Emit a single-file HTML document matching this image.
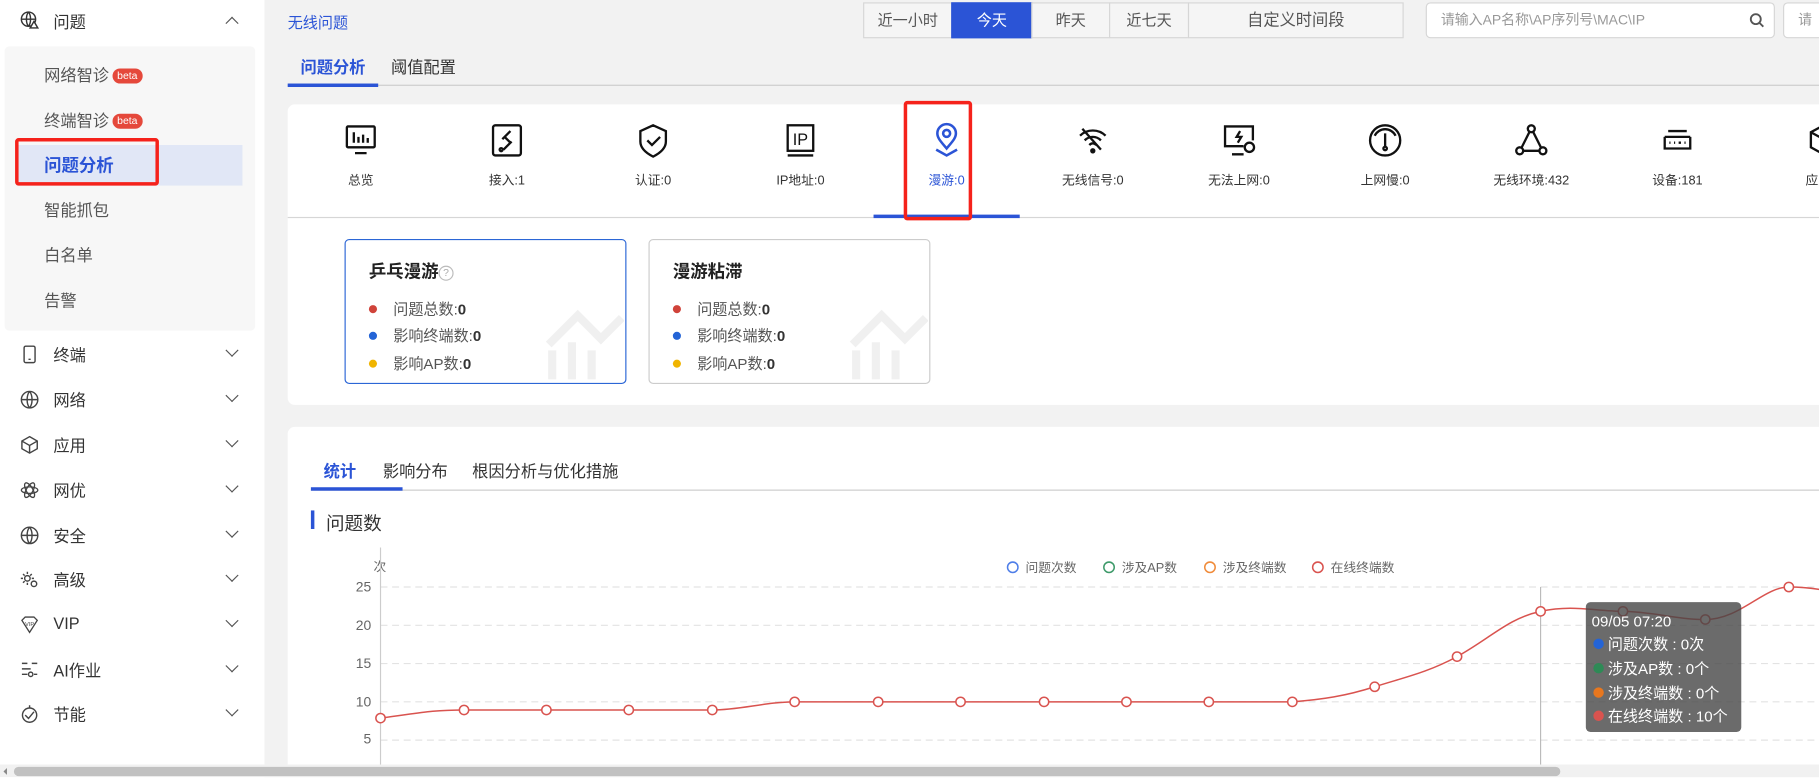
<!DOCTYPE html>
<html><head><meta charset="utf-8"><style>
*{box-sizing:border-box;margin:0;padding:0}
html,body{width:1819px;height:778px;overflow:hidden}
body{background:#fff;font-family:"Liberation Sans","Noto Sans CJK SC",sans-serif;font-size:14px;color:#333;position:relative}
#w{position:absolute;left:0;top:0;width:1568px;height:670px;overflow:hidden;transform:scale(1.16008);transform-origin:0 0;background:#fff}
.abs{position:absolute}
.side{left:0;top:0;width:228px;height:670px;background:#fff}
.sub{left:4px;top:40px;width:216px;height:245px;background:#f7f7f7;border-radius:4px}
.si{position:absolute;left:38px;font-size:14px;color:#555}
.mi{position:absolute;left:46px;font-size:14px;color:#333}
.chev{position:absolute;left:196px;width:8px;height:8px;border-right:1.5px solid #555;border-bottom:1.5px solid #555;transform:rotate(45deg)}
.ic{position:absolute;left:17px;width:17px;height:17px}
.beta{display:inline-block;background:#e5483b;color:#fff;font-size:9px;border-radius:7px;padding:0 4px;line-height:13px;margin-left:3px;vertical-align:2px}
.main{left:228px;top:0;width:1340px;height:670px;background:#f2f2f2}
.tb{position:absolute;top:2px;height:31px;border:1px solid #d6d6d6;background:#f5f5f5;font-size:13px;color:#555;text-align:center;line-height:29px}
.panel{background:#fff;border-radius:6px}
.it{position:absolute;top:105px;width:126px;text-align:center;font-size:11px;color:#333}
.it svg{display:block;margin:0 auto 10px;width:32px;height:32px}
.card{position:absolute;top:206px;width:243px;height:125px;border:1px solid #ccc;border-radius:4px;background:#fff}
.card h3{position:absolute;left:20px;top:16px;font-size:15px;font-weight:bold;color:#222}
.card .r{position:absolute;left:20px;font-size:13px;color:#555}
.card .r b{color:#333}
.dot{display:inline-block;width:7px;height:7px;border-radius:50%;margin-right:14px;vertical-align:1px}
.yl{position:absolute;left:300px;font-size:12px;color:#666;width:20px;text-align:right}
</style></head><body><div id="w">
<div class="abs side">
<svg class="ic" style="top:9px" viewBox="0 0 18 18" fill="none" stroke="#333" stroke-width="1.3"><circle cx="8" cy="8" r="6.5"/><path d="M1.5 8h13M8 1.5c-2.5 3-2.5 10 0 13M8 1.5c2.5 3 2.5 10 0 13"/><path d="M13 10l3.5 6h-7z" fill="#fff"/></svg>
<div class="mi" style="top:9px">问题</div>
<div class="chev" style="top:16px;transform:rotate(225deg)"></div>
<div class="abs sub"></div>
<div class="si" style="top:55px">网络智诊<span class="beta">beta</span></div>
<div class="si" style="top:94px">终端智诊<span class="beta">beta</span></div>
<div class="abs" style="left:14px;top:125px;width:195px;height:35px;background:#e1e7f6"></div>
<div class="abs" style="left:13px;top:119px;width:124px;height:41px;border:3px solid #f5221b;border-radius:3px"></div>
<div class="si" style="top:132px;color:#2b54d6;font-weight:bold;font-size:15px">问题分析</div>
<div class="si" style="top:171px">智能抓包</div>
<div class="si" style="top:210px">白名单</div>
<div class="si" style="top:249px">告警</div>
<svg class="ic" style="top:297px" viewBox="0 0 18 18" fill="none" stroke="#444" stroke-width="1.3"><rect x="4" y="1.5" width="10" height="15" rx="1.5"/><path d="M8 13.5h2"/></svg><div class="mi" style="top:296px">终端</div><div class="chev" style="top:298px"></div>
<svg class="ic" style="top:336px" viewBox="0 0 18 18" fill="none" stroke="#444" stroke-width="1.3"><circle cx="9" cy="9" r="7.5"/><path d="M1.5 9h15M9 1.5c-3 3.5-3 11.5 0 15M9 1.5c3 3.5 3 11.5 0 15"/></svg><div class="mi" style="top:335px">网络</div><div class="chev" style="top:337px"></div>
<svg class="ic" style="top:375px" viewBox="0 0 18 18" fill="none" stroke="#444" stroke-width="1.3"><path d="M9 1.5l7 4v7l-7 4-7-4v-7zM2 5.5l7 4 7-4M9 9.5v7"/></svg><div class="mi" style="top:374px">应用</div><div class="chev" style="top:376px"></div>
<svg class="ic" style="top:414px" viewBox="0 0 18 18" fill="none" stroke="#444" stroke-width="1.2"><ellipse cx="9" cy="9" rx="7.5" ry="3"/><ellipse cx="9" cy="9" rx="7.5" ry="3" transform="rotate(60 9 9)"/><ellipse cx="9" cy="9" rx="7.5" ry="3" transform="rotate(120 9 9)"/></svg><div class="mi" style="top:413px">网优</div><div class="chev" style="top:415px"></div>
<svg class="ic" style="top:453px" viewBox="0 0 18 18" fill="none" stroke="#444" stroke-width="1.3"><circle cx="9" cy="9" r="7.5"/><path d="M1.5 9h15M9 1.5c-3 3.5-3 11.5 0 15M9 1.5c3 3.5 3 11.5 0 15"/></svg><div class="mi" style="top:452px">安全</div><div class="chev" style="top:454px"></div>
<svg class="ic" style="top:491px" viewBox="0 0 18 18" fill="none" stroke="#444" stroke-width="1.3"><circle cx="7" cy="8" r="2.5"/><path d="M7 2v2M7 12v2M1 8h2M11 8h2M3 4l1.5 1.5M11 4l-1.5 1.5M3 12l1.5-1.5"/><circle cx="13" cy="13" r="2.5"/></svg><div class="mi" style="top:490px">高级</div><div class="chev" style="top:492px"></div>
<svg class="ic" style="top:530px" viewBox="0 0 18 18" fill="none" stroke="#444" stroke-width="1.2"><path d="M2 5l3-3h8l3 3-7 11z"/><text x="9" y="10" font-size="5" text-anchor="middle" fill="#444" stroke="none">VIP</text></svg><div class="mi" style="top:529px">VIP</div><div class="chev" style="top:531px"></div>
<svg class="ic" style="top:569px" viewBox="0 0 18 18" fill="none" stroke="#444" stroke-width="1.3"><path d="M2 3h5M2 8h8M2 13h5M11 3h5M13 13h3"/><circle cx="10" cy="13" r="2"/></svg><div class="mi" style="top:568px">AI作业</div><div class="chev" style="top:570px"></div>
<svg class="ic" style="top:607px" viewBox="0 0 18 18" fill="none" stroke="#444" stroke-width="1.3"><circle cx="9" cy="10" r="6.5"/><path d="M9 3.5V1M5 10l3 3 5-6"/></svg><div class="mi" style="top:606px">节能</div><div class="chev" style="top:608px"></div>
</div>

<div class="abs main"></div>
<div class="abs" style="left:248px;top:9px;font-size:13px;color:#2b54d6">无线问题</div>
<div class="tb" style="left:744px;width:77px">近一小时</div>
<div class="tb" style="left:820px;width:70px;background:#2b54d6;color:#fff;border-color:#2b54d6">今天</div>
<div class="tb" style="left:889px;width:68px">昨天</div>
<div class="tb" style="left:956px;width:69px">近七天</div>
<div class="tb" style="left:1024px;width:186px;font-size:14px">自定义时间段</div>
<div class="abs" style="left:1229px;top:2px;width:301px;height:31px;border:1px solid #d6d6d6;border-radius:4px;background:#fff;font-size:12px;color:#999;line-height:29px;padding-left:12px">请输入AP名称\AP序列号\MAC\IP
<svg style="position:absolute;right:8px;top:8px" width="13" height="13" viewBox="0 0 13 13" fill="none" stroke="#555" stroke-width="1.6"><circle cx="5.5" cy="5.5" r="4.3"/><path d="M8.7 8.7l3.3 3.3"/></svg></div>
<div class="abs" style="left:1537px;top:2px;width:290px;height:31px;border:1px solid #d6d6d6;border-radius:4px;background:#fff;font-size:12px;color:#999;line-height:29px;padding-left:12px">请</div>

<div class="abs" style="left:259px;top:48px;font-size:14px;font-weight:bold;color:#2b54d6">问题分析</div>
<div class="abs" style="left:337px;top:48px;font-size:14px;color:#333">阈值配置</div>
<div class="abs" style="left:248px;top:73px;width:1320px;height:1px;background:#ccc"></div>
<div class="abs" style="left:248px;top:72px;width:78px;height:3px;background:#2b54d6"></div>

<div class="abs panel" style="left:248px;top:90px;width:1580px;height:259px"></div>
<div class="abs" style="left:248px;top:187px;width:1320px;height:1px;background:#d6d6d6"></div>
<div class="abs" style="left:753px;top:185px;width:126px;height:3px;background:#2b54d6"></div>

<div class="it" style="left:248px"><svg viewBox="0 0 32 32" fill="none" stroke="#111" stroke-width="2"><rect x="4" y="4" width="24" height="18" rx="1"/><path d="M10 9v9M14 13v5M18 11v7M22 14v4M11 27h10"/></svg>总览</div>
<div class="it" style="left:374px"><svg viewBox="0 0 32 32" fill="none" stroke="#111" stroke-width="2"><rect x="4" y="3" width="24" height="26" rx="2"/><path d="M19 8l-7 7M20 17l-7 7M14 13l5 5"/><circle cx="11" cy="24" r="1.3"/></svg>接入:1</div>
<div class="it" style="left:500px"><svg viewBox="0 0 32 32" fill="none" stroke="#111" stroke-width="2"><path d="M16 3l11 5v9c0 6-5 10-11 13C10 27 5 23 5 17V8z"/><path d="M11 16l4 4 7-7"/></svg>认证:0</div>
<div class="it" style="left:627px"><svg viewBox="0 0 32 32" fill="none" stroke="#111" stroke-width="2"><rect x="5" y="3" width="22" height="22"/><path d="M5 29h22"/><text x="16" y="20" font-size="14" text-anchor="middle" fill="#111" stroke="none" font-family="Liberation Sans">IP</text></svg>IP地址:0</div>
<div class="it" style="left:753px;color:#2b54d6"><svg viewBox="0 0 32 32" fill="none" stroke="#2b54d6" stroke-width="2.2"><path d="M16 23c-5-6-8-9-8-13a8 8 0 0116 0c0 4-3 7-8 13z"/><circle cx="16" cy="10" r="3"/><path d="M7 24l9 5 9-5"/></svg>漫游:0</div>
<div class="it" style="left:879px"><svg viewBox="0 0 32 32" fill="none" stroke="#111" stroke-width="2"><path d="M5 12c6-6 16-6 22 0M9 16c4-4 10-4 14 0M13 20c2-2 4-2 6 0M7 6l16 18"/><circle cx="16" cy="25" r="1.3" fill="#111"/></svg>无线信号:0</div>
<div class="it" style="left:1005px"><svg viewBox="0 0 32 32" fill="none" stroke="#111" stroke-width="2"><path d="M20 21H4V4h24v12M10 28h10"/><path d="M17 8l-3 5h4l-3 5"/><circle cx="25" cy="22" r="4"/></svg>无法上网:0</div>
<div class="it" style="left:1131px"><svg viewBox="0 0 32 32" fill="none" stroke="#111" stroke-width="2"><circle cx="16" cy="16" r="13"/><path d="M7 12a10 10 0 0118 0M16 10v12"/><circle cx="16" cy="23" r="1.5"/></svg>上网慢:0</div>
<div class="it" style="left:1257px"><svg viewBox="0 0 32 32" fill="none" stroke="#111" stroke-width="2"><circle cx="16" cy="6" r="3"/><circle cx="6" cy="25" r="3"/><circle cx="26" cy="25" r="3"/><path d="M14.5 8.5L7.5 22.5M17.5 8.5l7 14M9 25h14"/></svg>无线环境:432</div>
<div class="it" style="left:1383px"><svg viewBox="0 0 32 32" fill="none" stroke="#111" stroke-width="2"><path d="M8 8h16M5 13h22M5 13v10h22V13"/><path d="M9 18h1M13 18h1M17 18h2M22 18h1"/></svg>设备:181</div>
<div class="it" style="left:1509px"><svg viewBox="0 0 32 32" fill="none" stroke="#111" stroke-width="2"><path d="M16 3l11 6v13l-11 6-11-6V9zM5 9l11 6 11-6M16 15v13"/></svg>应用:0</div>
<div class="abs" style="left:779px;top:87px;width:59px;height:103px;border:3px solid #f5221b;border-radius:3px"></div>

<div class="card" style="left:297px;border-color:#2b66d6">
<h3>乒乓漫游<span style="display:inline-block;width:13px;height:13px;border:1px solid #bbb;border-radius:50%;font-size:9px;color:#aaa;text-align:center;line-height:11px;font-weight:normal;vertical-align:1px">?</span></h3>
<div class="r" style="top:49px"><span class="dot" style="background:#d0433a"></span>问题总数:<b>0</b></div>
<div class="r" style="top:72px"><span class="dot" style="background:#2464d6"></span>影响终端数:<b>0</b></div>
<div class="r" style="top:96px"><span class="dot" style="background:#f0b400"></span>影响AP数:<b>0</b></div>
<svg style="position:absolute;left:170px;top:50px" width="70" height="70" viewBox="0 0 70 70" fill="none" stroke="#f0f0f0" stroke-width="7"><path d="M5 40l25-25 20 20 18-18M8 70V45M25 70V38M42 70V45"/></svg>
</div>
<div class="card" style="left:559px">
<h3>漫游粘滞</h3>
<div class="r" style="top:49px"><span class="dot" style="background:#d0433a"></span>问题总数:<b>0</b></div>
<div class="r" style="top:72px"><span class="dot" style="background:#2464d6"></span>影响终端数:<b>0</b></div>
<div class="r" style="top:96px"><span class="dot" style="background:#f0b400"></span>影响AP数:<b>0</b></div>
<svg style="position:absolute;left:170px;top:50px" width="70" height="70" viewBox="0 0 70 70" fill="none" stroke="#f0f0f0" stroke-width="7"><path d="M5 40l25-25 20 20 18-18M8 70V45M25 70V38M42 70V45"/></svg>
</div>

<div class="abs panel" style="left:248px;top:368px;width:1580px;height:300px"></div>
<div class="abs" style="left:279px;top:396px;font-size:14px;font-weight:bold;color:#2b54d6">统计</div>
<div class="abs" style="left:330px;top:396px;font-size:14px;color:#333">影响分布</div>
<div class="abs" style="left:407px;top:396px;font-size:14px;color:#333">根因分析与优化措施</div>
<div class="abs" style="left:268px;top:422px;width:1300px;height:1px;background:#ccc"></div>
<div class="abs" style="left:268px;top:420px;width:79px;height:3px;background:#2b54d6"></div>
<div class="abs" style="left:268px;top:440px;width:3px;height:16px;background:#2b54d6"></div>
<div class="abs" style="left:281px;top:438px;font-size:16px;color:#333">问题数</div>

<div class="abs" style="left:322px;top:480px;font-size:11px;color:#666">次</div>
<div class="yl" style="top:499px">25</div><div class="yl" style="top:532px">20</div><div class="yl" style="top:565px">15</div><div class="yl" style="top:598px">10</div><div class="yl" style="top:630px">5</div>
<svg class="abs" style="left:0;top:0" width="1568" height="670">
<g stroke="#e3e3e3" stroke-dasharray="6 4"><path d="M328 506H1568M328 539H1568M328 572H1568M328 605H1568M328 638H1568"/></g>
<path d="M328 472V660" stroke="#ccc"/>
<path d="M1328 506V660" stroke="#bbb"/>
<g font-size="11" fill="#666" font-family="Liberation Sans,Noto Sans CJK SC,sans-serif">
<circle cx="873" cy="489" r="4.5" fill="none" stroke="#4e7ee8" stroke-width="1.3"/><text x="884" y="493">问题次数</text>
<circle cx="956" cy="489" r="4.5" fill="none" stroke="#3e9a6a" stroke-width="1.3"/><text x="967" y="493">涉及AP数</text>
<circle cx="1043" cy="489" r="4.5" fill="none" stroke="#f08b3a" stroke-width="1.3"/><text x="1054" y="493">涉及终端数</text>
<circle cx="1136" cy="489" r="4.5" fill="none" stroke="#d9534f" stroke-width="1.3"/><text x="1147" y="493">在线终端数</text>
</g>
<path d="M328 619C360 615 370 612 400 612S450 612 471 612 520 612 542 612 590 612 614 612 660 605 685 605 740 605 757 605 810 605 828 605 880 605 900 605 950 605 971 605 1020 605 1042 605 1090 605 1114 605C1140 603 1160 600 1185 592S1230 580 1256 566C1285 550 1300 533 1328 527S1375 527 1399 527 1445 534 1470 534C1500 534 1520 506 1542 506S1580 510 1600 515" fill="none" stroke="#d9534f" stroke-width="1.3"/>
<g fill="#fff" stroke="#d9534f" stroke-width="1.3">
<circle cx="328" cy="619" r="4"/><circle cx="400" cy="612" r="4"/><circle cx="471" cy="612" r="4"/><circle cx="542" cy="612" r="4"/><circle cx="614" cy="612" r="4"/><circle cx="685" cy="605" r="4"/><circle cx="757" cy="605" r="4"/><circle cx="828" cy="605" r="4"/><circle cx="900" cy="605" r="4"/><circle cx="971" cy="605" r="4"/><circle cx="1042" cy="605" r="4"/><circle cx="1114" cy="605" r="4"/><circle cx="1185" cy="592" r="4"/><circle cx="1256" cy="566" r="4"/><circle cx="1328" cy="527" r="4"/><circle cx="1399" cy="527" r="4"/><circle cx="1470" cy="534" r="4"/><circle cx="1542" cy="506" r="4"/>
</g>
<rect x="1367" y="519" width="134" height="112" rx="4" fill="rgba(70,70,70,0.8)"/>
<g font-size="13" fill="#fff" font-family="Liberation Sans,Noto Sans CJK SC,sans-serif">
<text x="1372" y="540">09/05 07:20</text>
<circle cx="1378" cy="555" r="4.5" fill="#2464d6"/><text x="1386" y="560">问题次数 : 0次</text>
<circle cx="1378" cy="576" r="4.5" fill="#2e8a56"/><text x="1386" y="581">涉及AP数 : 0个</text>
<circle cx="1378" cy="597" r="4.5" fill="#e8771e"/><text x="1386" y="602">涉及终端数 : 0个</text>
<circle cx="1378" cy="617" r="4.5" fill="#d9534f"/><text x="1386" y="622">在线终端数 : 10个</text>
</g>
<rect x="0" y="659" width="1568" height="12" fill="#f1f1f1"/>
<rect x="12" y="661" width="1333" height="8" rx="4" fill="#c1c1c1"/>
<path d="M6 662l-3 3 3 3z" fill="#888"/>
</svg>
</div></body></html>
